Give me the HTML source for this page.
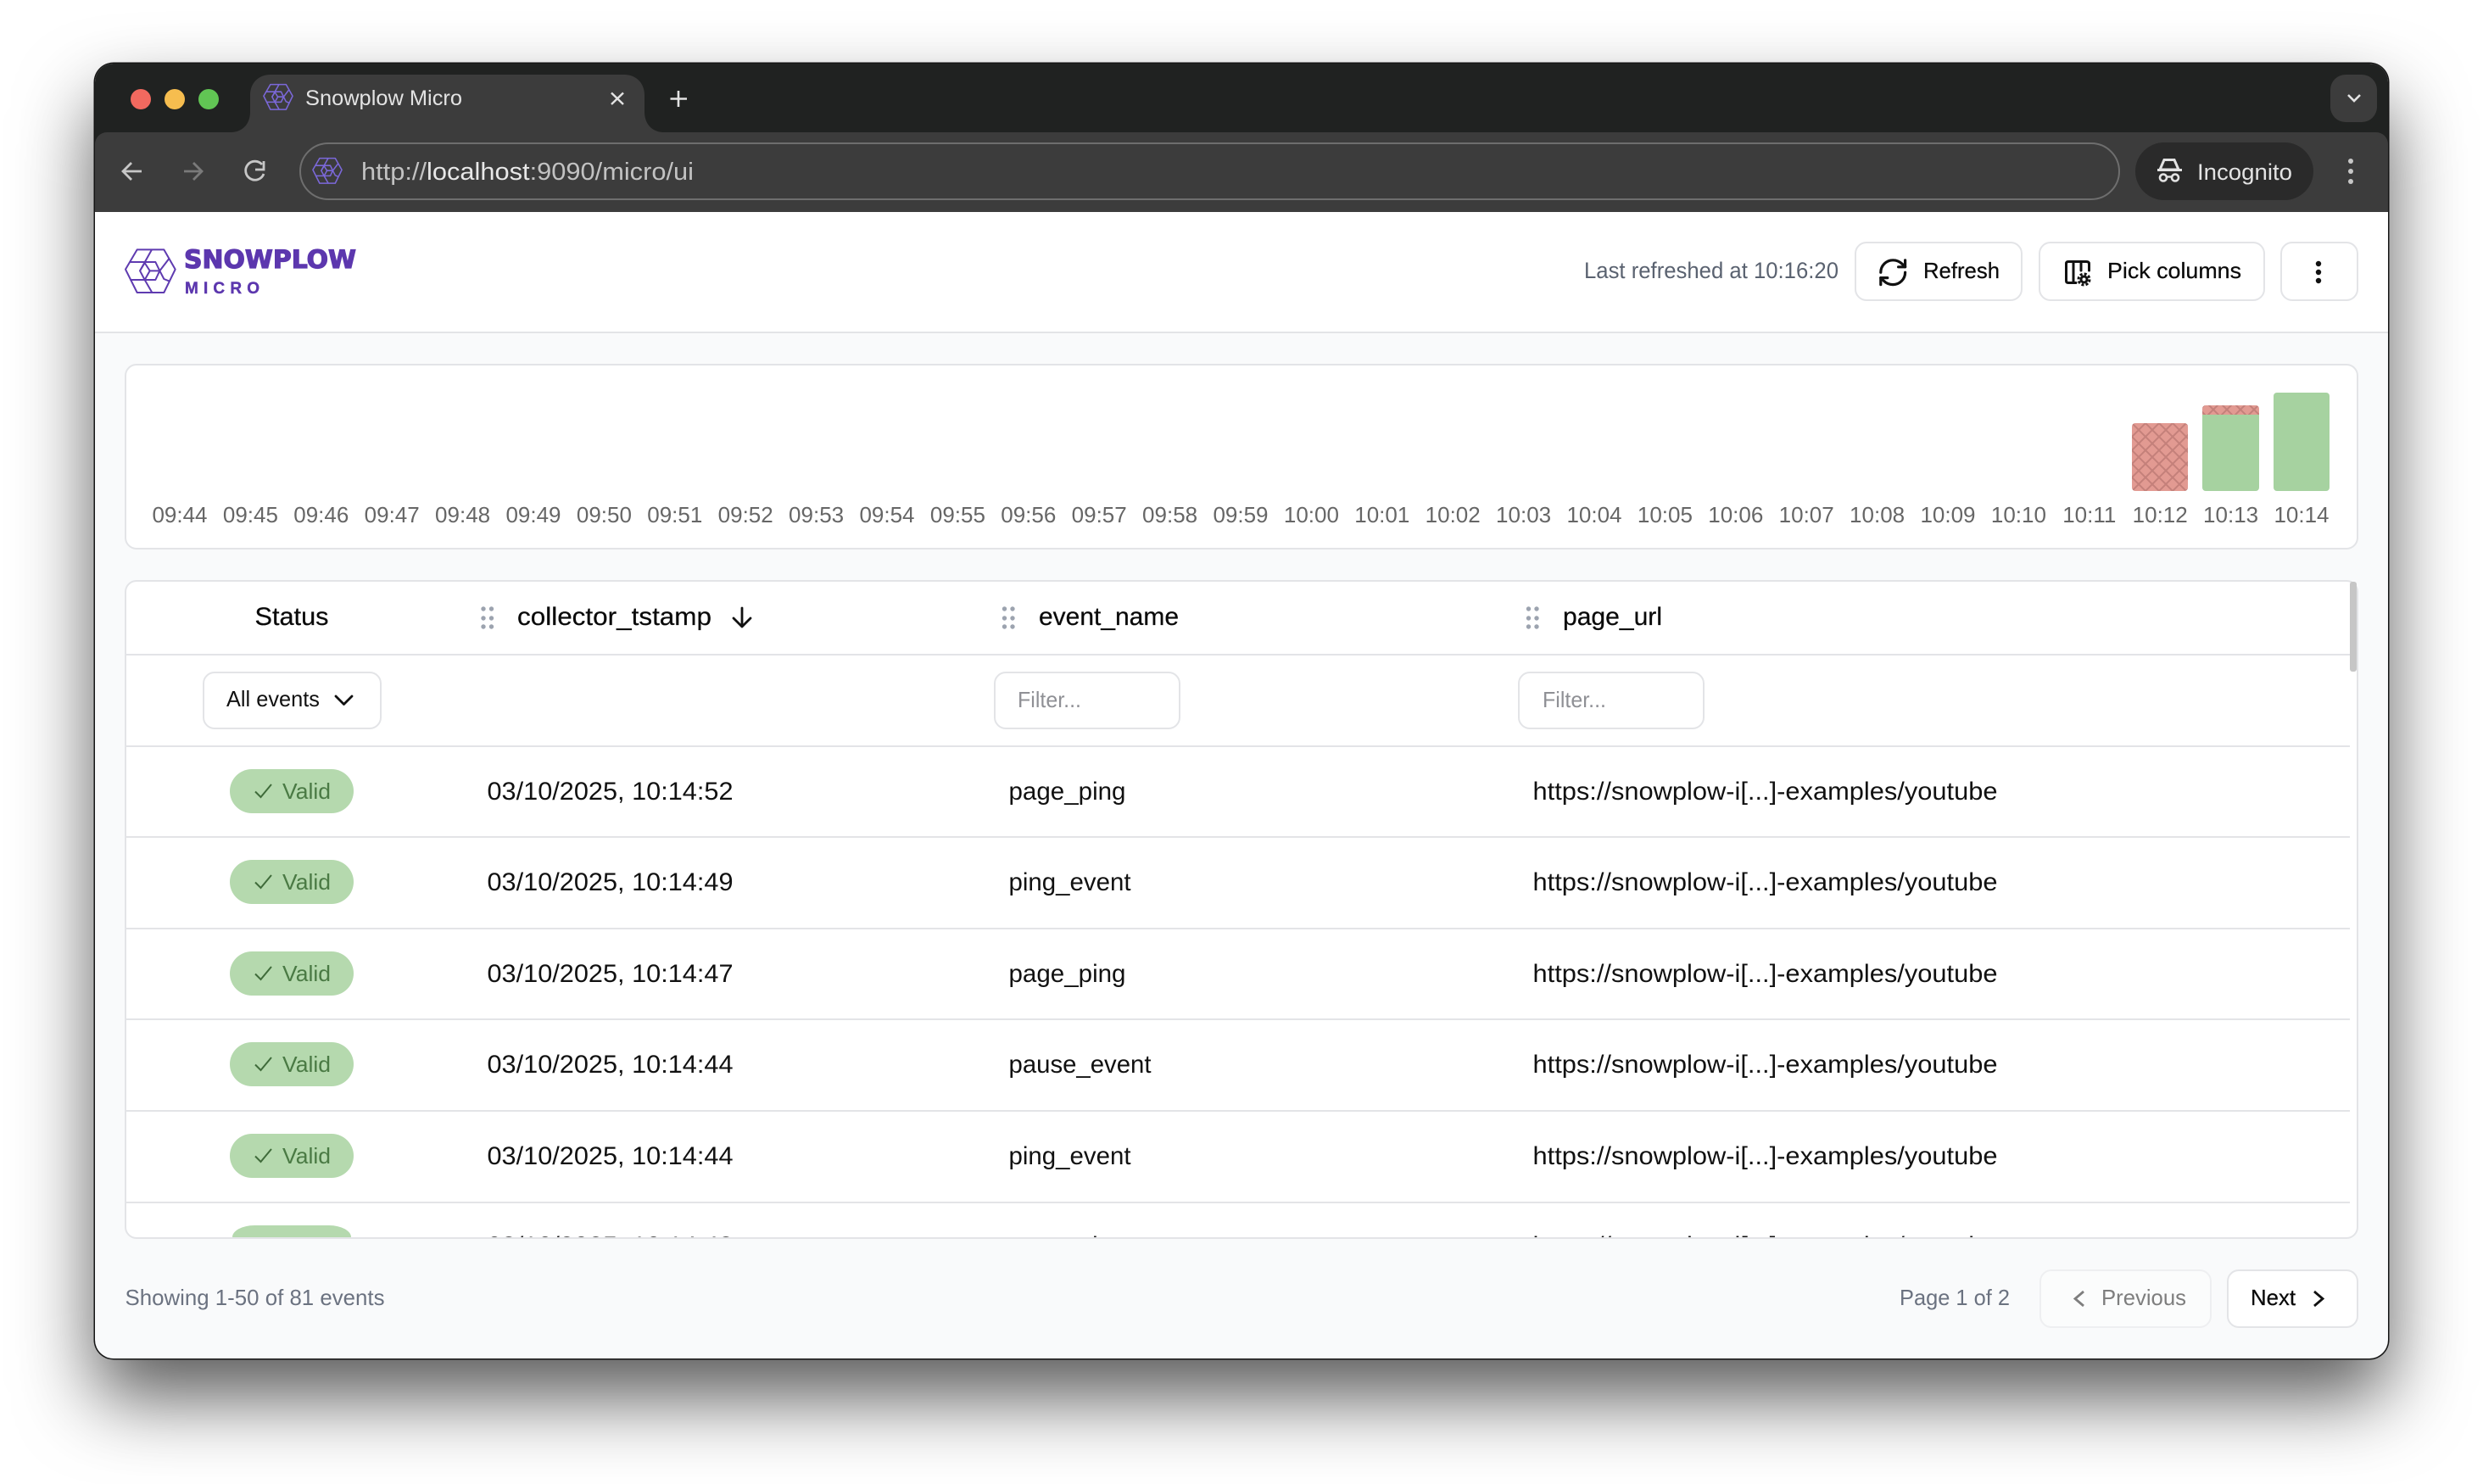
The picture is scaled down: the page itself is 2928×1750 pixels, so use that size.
<!DOCTYPE html>
<html lang="en"><head><meta charset="utf-8"><title>Snowplow Micro</title>
<style>
html,body{margin:0;padding:0;background:#fff;width:2928px;height:1750px;overflow:hidden}
div{position:absolute;box-sizing:border-box}
svg{position:absolute;left:0;top:0}
text{font-family:"Liberation Sans",sans-serif;white-space:pre}
.box{background:#fff;border:2px solid #e3e4e7;border-radius:14px}
.line{background:#e3e4e7;height:2px;left:149px;width:2622px}
.badge{left:271px;width:146px;height:52px;border-radius:26px;background:#b5d9ae}
.c{font-size:30px;fill:#111}
.h{font-size:30px;fill:#0a0a0a;stroke:#0a0a0a;stroke-width:.25px}
.v{font-size:26px;fill:#4a7a44}
.l{font-size:26px;fill:#666}
.b{font-size:26px;fill:#0a0a0a;stroke:#0a0a0a;stroke-width:.25px}
.g{font-size:26px;fill:#6b7280}
</style></head><body>
<div id="win" style="left:112px;top:75px;width:2704px;height:1527px;border-radius:22px;background:#f9fafb;box-shadow:0 0 0 1.5px #151515,0 46px 90px rgba(0,0,0,.65)"></div>
<div style="left:112px;top:75px;width:2704px;height:110px;background:#202221;border-radius:22px 22px 0 0"></div>
<div style="left:112px;top:156px;width:2704px;height:94px;background:#3c3c3c;border-radius:14px 14px 0 0"></div>
<div style="left:353px;top:168px;width:2147px;height:68px;border:2px solid #6e6e6e;border-radius:34px"></div>
<div style="left:2518px;top:168px;width:210px;height:68px;background:#2a2a2a;border-radius:34px"></div>
<div style="left:2748px;top:88px;width:55px;height:56px;background:#3c3c3c;border-radius:18px"></div>
<div style="left:112px;top:250px;width:2704px;height:142px;background:#fff"></div>
<div style="left:112px;top:391px;width:2704px;height:2px;background:#e3e4e7"></div>

<div class="box" style="left:2187px;top:285px;width:198px;height:70px"></div>
<div class="box" style="left:2404px;top:285px;width:267px;height:70px"></div>
<div class="box" style="left:2689px;top:285px;width:92px;height:70px"></div>

<div class="box" style="left:147px;top:429px;width:2634px;height:219px"></div>
<div class="box" style="left:147px;top:684px;width:2634px;height:777px"></div>
<div style="left:2771px;top:686px;width:8px;height:106px;background:#c6c6c6;border-radius:3px"></div>
<div class="line" style="top:771px"></div>
<div class="line" style="top:879px"></div>
<div class="line" style="top:986px"></div>
<div class="line" style="top:1094px"></div>
<div class="line" style="top:1201px"></div>
<div class="line" style="top:1309px"></div>
<div class="line" style="top:1417px"></div>
<div class="box" style="left:239px;top:792px;width:211px;height:68px"></div>
<div class="box" style="left:1172px;top:792px;width:220px;height:68px"></div>
<div class="box" style="left:1790px;top:792px;width:220px;height:68px"></div>
<div class="badge" style="top:907px"></div>
<div class="badge" style="top:1014px"></div>
<div class="badge" style="top:1122px"></div>
<div class="badge" style="top:1229px"></div>
<div class="badge" style="top:1337px"></div>
<div class="badge" style="top:1445px;height:14px;border-radius:26px 26px 0 0/14px 14px 0 0;left:274px;width:140px"></div>
<div class="box" style="left:2405px;top:1497px;width:203px;height:69px;background:#fbfcfc;border-color:#eeeff1"></div>
<div class="box" style="left:2626px;top:1497px;width:155px;height:69px"></div>

<svg width="2928" height="1750" viewBox="0 0 2928 1750" xmlns="http://www.w3.org/2000/svg">
<defs>
<pattern id="hatch" width="16" height="16" patternUnits="userSpaceOnUse" x="2514" y="499">
<rect width="16" height="16" fill="#e29a92"/>
<path d="M0 0L16 16M16 0L0 16" stroke="#c4807a" stroke-width="2"/>
</pattern>
<clipPath id="tbl"><rect x="150" y="686" width="2621" height="773"/></clipPath>
<clipPath id="top13"><rect x="2597" y="478" width="67" height="12"/></clipPath>
<g id="hex" fill="none" stroke-linejoin="round">
<path d="M24 98L65 28H160L200 98L160 180H65Z"/>
<path d="M117 28L75 103L92 135L118 180"/>
<path d="M40 72H130L145 103H110L92 75L75 103M92 75L110 103L92 135"/>
<path d="M40 135H130L145 103L178 60M145 103L160 132L180 140"/>
</g>
</defs>

<!-- tab -->
<path d="M272 156C286 156 295 146 295 132V112C295 98 305 88 319 88H736C750 88 760 98 760 112V132C760 146 769 156 783 156Z" fill="#3c3c3c"/>
<circle cx="166" cy="117" r="12" fill="#f2695f"/>
<circle cx="206" cy="117" r="12" fill="#f6bd4f"/>
<circle cx="246" cy="117" r="12" fill="#61c554"/>
<svg x="309" y="97" width="38" height="34" viewBox="14 16 196 172"><use href="#hex" stroke="#7b68d9" stroke-width="8"/></svg>
<text x="360" y="124" font-size="25" fill="#e3e3e3" textLength="185" lengthAdjust="spacingAndGlyphs">Snowplow Micro</text>
<path d="M721 109.500L735 123M735 109.500L721 123" stroke="#e3e3e3" stroke-width="2.400" fill="none"/>
<path d="M800 107V126M790.500 116.500H810" stroke="#e3e3e3" stroke-width="2.600" fill="none"/>
<path d="M2769 112L2776 119L2783 112" stroke="#e3e3e3" stroke-width="2.600" fill="none"/>

<!-- toolbar -->
<path d="M167 202H146M155 192L145 202L155 212" stroke="#c7c7c7" stroke-width="2.800" fill="none"/>
<path d="M217 202H238M228 192L238 202L228 212" stroke="#7a7a7a" stroke-width="2.800" fill="none"/>
<path d="M309 194A11 11 0 1 0 311 205" stroke="#c7c7c7" stroke-width="2.800" fill="none"/>
<path d="M311 190V200H301" stroke="#c7c7c7" stroke-width="2.800" fill="none"/>
<svg x="367" y="184" width="38" height="34" viewBox="14 16 196 172"><use href="#hex" stroke="#7b68d9" stroke-width="8"/></svg>
<text x="426" y="212" font-size="29" fill="#c2c2c2" textLength="392" lengthAdjust="spacingAndGlyphs">http://<tspan fill="#e8e8e8">localhost</tspan>:9090/micro/ui</text>
<path d="M2552 188.500H2564L2569 200H2547Z" fill="none" stroke="#e3e3e3" stroke-width="3"/>
<path d="M2544 200.500H2573" stroke="#e3e3e3" stroke-width="3"/>
<circle cx="2551" cy="209.500" r="4" fill="none" stroke="#e3e3e3" stroke-width="2.600"/>
<circle cx="2565" cy="209.500" r="4" fill="none" stroke="#e3e3e3" stroke-width="2.600"/>
<path d="M2555 208.500H2561" stroke="#e3e3e3" stroke-width="2.400"/>
<text x="2591" y="212" font-size="26.500" fill="#e3e3e3" textLength="112" lengthAdjust="spacingAndGlyphs">Incognito</text>
<circle cx="2772" cy="190" r="3" fill="#c7c7c7"/><circle cx="2772" cy="202" r="3" fill="#c7c7c7"/><circle cx="2772" cy="214" r="3" fill="#c7c7c7"/>

<!-- app header -->
<svg x="140" y="285" width="80" height="70" viewBox="0 0 240 210"><use href="#hex" stroke="#5f3bb0" stroke-width="6"/></svg>
<text x="217" y="316" style="font-family:'DejaVu Sans',sans-serif" font-weight="700" font-size="29" fill="#5c37ae" stroke="#5c37ae" stroke-width="1.200" textLength="203" lengthAdjust="spacingAndGlyphs">SNOWPLOW</text>
<text x="218" y="346" font-weight="700" font-size="19" fill="#5c37ae" stroke="#5c37ae" stroke-width=".4" textLength="88">MICRO</text>
<text x="1868" y="328" font-size="27" fill="#5a6270" textLength="300" lengthAdjust="spacingAndGlyphs">Last refreshed at 10:16:20</text>
<g fill="none" stroke="#111" stroke-width="2" stroke-linecap="round" stroke-linejoin="round" transform="translate(2213 302) scale(1.600)">
<path d="M3 12a9 9 0 0 1 9-9 9.750 9.750 0 0 1 6.740 2.740L21 8"/><path d="M21 3v5h-5"/><path d="M21 12a9 9 0 0 1-9 9 9.750 9.750 0 0 1-6.740-2.740L3 16"/><path d="M8 16H3v5"/></g>
<text class="b" x="2268" y="328" textLength="90" lengthAdjust="spacingAndGlyphs">Refresh</text>
<g fill="none" stroke="#111" stroke-width="3" stroke-linecap="round" stroke-linejoin="round">
<path d="M2448 333.500H2439Q2436.500 333.500 2436.500 331V311Q2436.500 308.500 2439 308.500H2460Q2463.500 308.500 2463.500 311V319"/>
<path d="M2445 309V333M2454 309V319"/>
<circle cx="2457.500" cy="329.500" r="3.500"/>
<circle cx="2457.500" cy="329.500" r="6.500" stroke-dasharray="3 2.100" stroke-width="3" stroke-linecap="butt"/>
</g>
<text class="b" x="2485" y="328" textLength="158" lengthAdjust="spacingAndGlyphs">Pick columns</text>
<circle cx="2734" cy="311" r="3.200" fill="#111"/><circle cx="2734" cy="321" r="3.200" fill="#111"/><circle cx="2734" cy="331" r="3.200" fill="#111"/>

<!-- chart -->
<rect x="2514" y="499" width="66" height="80" rx="4" fill="url(#hatch)"/>
<rect x="2597" y="478" width="67" height="30" rx="4" fill="url(#hatch)" clip-path="url(#top13)"/>
<path d="M2597 489H2664V575a4 4 0 0 1-4 4H2601a4 4 0 0 1-4-4Z" fill="#a6d2a0"/>
<rect x="2681" y="463" width="66" height="116" rx="4" fill="#a6d2a0"/>
<g class="labels" text-anchor="middle">
<text class="l" x="212" y="616">09:44</text><text class="l" x="295.400" y="616">09:45</text><text class="l" x="378.800" y="616">09:46</text><text class="l" x="462.200" y="616">09:47</text><text class="l" x="545.600" y="616">09:48</text><text class="l" x="629" y="616">09:49</text><text class="l" x="712.400" y="616">09:50</text><text class="l" x="795.800" y="616">09:51</text><text class="l" x="879.200" y="616">09:52</text><text class="l" x="962.600" y="616">09:53</text><text class="l" x="1046" y="616">09:54</text><text class="l" x="1129.400" y="616">09:55</text><text class="l" x="1212.800" y="616">09:56</text><text class="l" x="1296.200" y="616">09:57</text><text class="l" x="1379.600" y="616">09:58</text><text class="l" x="1463" y="616">09:59</text><text class="l" x="1546.400" y="616">10:00</text><text class="l" x="1629.800" y="616">10:01</text><text class="l" x="1713.200" y="616">10:02</text><text class="l" x="1796.600" y="616">10:03</text><text class="l" x="1880" y="616">10:04</text><text class="l" x="1963.400" y="616">10:05</text><text class="l" x="2046.800" y="616">10:06</text><text class="l" x="2130.200" y="616">10:07</text><text class="l" x="2213.600" y="616">10:08</text><text class="l" x="2297" y="616">10:09</text><text class="l" x="2380.400" y="616">10:10</text><text class="l" x="2463.800" y="616">10:11</text><text class="l" x="2547.200" y="616">10:12</text><text class="l" x="2630.600" y="616">10:13</text><text class="l" x="2714" y="616">10:14</text>
</g>

<!-- table head -->
<text class="h" x="300.500" y="737" textLength="87" lengthAdjust="spacingAndGlyphs">Status</text>
<g fill="#9ca3af">
<circle cx="570" cy="718" r="2.700"/><circle cx="579.500" cy="718" r="2.700"/><circle cx="570" cy="729" r="2.700"/><circle cx="579.500" cy="729" r="2.700"/><circle cx="570" cy="739" r="2.700"/><circle cx="579.500" cy="739" r="2.700"/>
<circle cx="1184.500" cy="718" r="2.700"/><circle cx="1194" cy="718" r="2.700"/><circle cx="1184.500" cy="729" r="2.700"/><circle cx="1194" cy="729" r="2.700"/><circle cx="1184.500" cy="739" r="2.700"/><circle cx="1194" cy="739" r="2.700"/>
<circle cx="1802.500" cy="718" r="2.700"/><circle cx="1812" cy="718" r="2.700"/><circle cx="1802.500" cy="729" r="2.700"/><circle cx="1812" cy="729" r="2.700"/><circle cx="1802.500" cy="739" r="2.700"/><circle cx="1812" cy="739" r="2.700"/>
</g>
<text class="h" x="610" y="737" textLength="229" lengthAdjust="spacingAndGlyphs">collector_tstamp</text>
<path d="M875 717V739M865 729L875 739L885 729" stroke="#111" stroke-width="2.800" fill="none" stroke-linecap="round" stroke-linejoin="round"/>
<text class="h" x="1225" y="737" textLength="165" lengthAdjust="spacingAndGlyphs">event_name</text>
<text class="h" x="1843" y="737" textLength="117" lengthAdjust="spacingAndGlyphs">page_url</text>
<text x="267" y="833" font-size="26" fill="#111" textLength="110" lengthAdjust="spacingAndGlyphs">All events</text>
<path d="M396 821L405.500 830.500L415 821" stroke="#111" stroke-width="2.800" fill="none" stroke-linecap="round" stroke-linejoin="round"/>
<text x="1200" y="834" font-size="26" fill="#8f9095" textLength="75" lengthAdjust="spacingAndGlyphs">Filter...</text>
<text x="1819" y="834" font-size="26" fill="#8f9095" textLength="75" lengthAdjust="spacingAndGlyphs">Filter...</text>

<!-- rows -->
<g fill="none" stroke="#3f6b3a" stroke-width="2">
<path d="M301 933.500L307.500 940L320 925"/><path d="M301 1040.500L307.500 1047L320 1032"/><path d="M301 1148.500L307.500 1155L320 1140"/><path d="M301 1255.500L307.500 1262L320 1247"/><path d="M301 1363.500L307.500 1370L320 1355"/>
</g>
<text class="v" x="333" y="942" textLength="57" lengthAdjust="spacingAndGlyphs">Valid</text>
<text class="v" x="333" y="1049" textLength="57" lengthAdjust="spacingAndGlyphs">Valid</text>
<text class="v" x="333" y="1157" textLength="57" lengthAdjust="spacingAndGlyphs">Valid</text>
<text class="v" x="333" y="1264" textLength="57" lengthAdjust="spacingAndGlyphs">Valid</text>
<text class="v" x="333" y="1372" textLength="57" lengthAdjust="spacingAndGlyphs">Valid</text>
<g clip-path="url(#tbl)">
<text class="c" x="574.500" y="943" textLength="290" lengthAdjust="spacingAndGlyphs">03/10/2025, 10:14:52</text>
<text class="c" x="1189.500" y="943" textLength="138" lengthAdjust="spacingAndGlyphs">page_ping</text>
<text class="c" x="1807.500" y="943" textLength="548" lengthAdjust="spacingAndGlyphs">https://snowplow-i[...]-examples/youtube</text>
<text class="c" x="574.500" y="1050" textLength="290" lengthAdjust="spacingAndGlyphs">03/10/2025, 10:14:49</text>
<text class="c" x="1189.500" y="1050" textLength="144" lengthAdjust="spacingAndGlyphs">ping_event</text>
<text class="c" x="1807.500" y="1050" textLength="548" lengthAdjust="spacingAndGlyphs">https://snowplow-i[...]-examples/youtube</text>
<text class="c" x="574.500" y="1158" textLength="290" lengthAdjust="spacingAndGlyphs">03/10/2025, 10:14:47</text>
<text class="c" x="1189.500" y="1158" textLength="138" lengthAdjust="spacingAndGlyphs">page_ping</text>
<text class="c" x="1807.500" y="1158" textLength="548" lengthAdjust="spacingAndGlyphs">https://snowplow-i[...]-examples/youtube</text>
<text class="c" x="574.500" y="1265" textLength="290" lengthAdjust="spacingAndGlyphs">03/10/2025, 10:14:44</text>
<text class="c" x="1189.500" y="1265" textLength="168" lengthAdjust="spacingAndGlyphs">pause_event</text>
<text class="c" x="1807.500" y="1265" textLength="548" lengthAdjust="spacingAndGlyphs">https://snowplow-i[...]-examples/youtube</text>
<text class="c" x="574.500" y="1373" textLength="290" lengthAdjust="spacingAndGlyphs">03/10/2025, 10:14:44</text>
<text class="c" x="1189.500" y="1373" textLength="144" lengthAdjust="spacingAndGlyphs">ping_event</text>
<text class="c" x="1807.500" y="1373" textLength="548" lengthAdjust="spacingAndGlyphs">https://snowplow-i[...]-examples/youtube</text>
<text class="c" x="574.500" y="1479" textLength="290" lengthAdjust="spacingAndGlyphs">03/10/2025, 10:14:43</text>
<text class="c" x="1189.500" y="1479" textLength="138" lengthAdjust="spacingAndGlyphs">page_ping</text>
<text class="c" x="1807.500" y="1479" textLength="548" lengthAdjust="spacingAndGlyphs">https://snowplow-i[...]-examples/youtube</text>
</g>

<!-- footer -->
<text class="g" x="147.500" y="1539" textLength="306" lengthAdjust="spacingAndGlyphs">Showing 1-50 of 81 events</text>
<text class="g" x="2240" y="1539" textLength="130" lengthAdjust="spacingAndGlyphs">Page 1 of 2</text>
<path d="M2457 1523L2447 1531.500L2457 1540" stroke="#7e7e7e" stroke-width="2.800" fill="none"/>
<text x="2478" y="1539" font-size="26" fill="#7e7e7e" textLength="100" lengthAdjust="spacingAndGlyphs">Previous</text>
<text class="b" x="2654" y="1539" textLength="53" lengthAdjust="spacingAndGlyphs">Next</text>
<path d="M2729 1523L2739 1531.500L2729 1540" stroke="#111" stroke-width="2.800" fill="none"/>
</svg>
</body></html>
